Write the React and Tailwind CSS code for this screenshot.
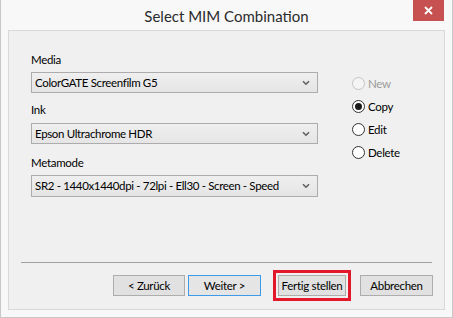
import React from 'react';

const font = { fontFamily: '"Segoe UI", Lato, "Noto Sans", sans-serif' };

function Select({ value, h = 'h-[21px]' }) {
  return (
    <div
      className={`w-[287px] ${h} border border-[#acacac] bg-gradient-to-b from-[#efefef] to-[#e5e5e5] flex items-center justify-between pl-[3px] pr-[7px]`}
    >
      <span className="text-[11.5px] tracking-[-0.35px] text-black whitespace-nowrap">{value}</span>
      <svg width="8" height="6" viewBox="0 0 8 6">
        <path d="M1 1.2 L4 4.2 L7 1.2" stroke="#606060" strokeWidth="1.6" fill="none" />
      </svg>
    </div>
  );
}

function Radio({ label, checked, disabled }) {
  return (
    <div className="h-[23px] flex items-center gap-[3px]">
      <span
        className={`w-[13px] h-[13px] rounded-full border flex items-center justify-center ${
          disabled ? 'border-[#c4c4c4] bg-[#f4f4f4]' : 'border-[#333] bg-white'
        }`}
      >
        {checked && <span className="w-[7px] h-[7px] rounded-full bg-[#1a1a1a]" />}
      </span>
      <span className={`text-[11.5px] tracking-[-0.3px] ${disabled ? 'text-[#9a9a9a]' : 'text-black'}`}>{label}</span>
    </div>
  );
}

function Button({ children, className = '' }) {
  return (
    <button
      className={`h-[21px] border text-[11.5px] tracking-[-0.3px] text-black whitespace-nowrap flex items-center justify-center ${className}`}
    >
      {children}
    </button>
  );
}

export default function App() {
  return (
    <div className="w-[453px] h-[318px] bg-[#f8f8f8] border-l border-r border-b border-[#c8c8c8] flex flex-col" style={font}>
      {/* Title bar */}
      <div className="h-[30px] relative flex items-center justify-center">
        <span className="text-[15px] text-[#2b2b2b] mt-[2px]">Select MIM Combination</span>
        <div className="absolute right-[8px] top-0 w-[31px] h-[21px] bg-[#c75050] flex items-center justify-center">
          <svg width="9" height="9" viewBox="0 0 9 9">
            <path d="M1 1 L8 8 M8 1 L1 8" stroke="white" strokeWidth="1.8" />
          </svg>
        </div>
      </div>

      {/* Client area */}
      <div className="mx-[7px] h-[280px] border border-[#d9d9d9] bg-[#f0f0f0] flex flex-col">
        <div className="flex-1 flex pl-[22px] pt-[21px]">
          <div className="flex flex-col w-[287px] text-[11.5px] tracking-[-0.3px] text-black">
            <div className="h-[16px] leading-[16px]">Media</div>
            <div className="mt-[4px]">
              <Select value="ColorGATE Screenfilm G5" />
            </div>
            <div className="mt-[9px] h-[16px] leading-[16px]">Ink</div>
            <div className="mt-[5px]">
              <Select value="Epson Ultrachrome HDR" />
            </div>
            <div className="mt-[11px] h-[16px] leading-[16px]">Metamode</div>
            <div className="mt-[4px]">
              <Select value="SR2 - 1440x1440dpi - 72lpi - Ell30 - Screen - Speed" h="h-[22px]" />
            </div>
          </div>
          <div className="ml-[34px] pt-[20px] flex flex-col">
            <Radio label="New" disabled />
            <Radio label="Copy" checked />
            <Radio label="Edit" />
            <Radio label="Delete" />
          </div>
        </div>

        <div className="mx-[12px] border-t border-[#a0a0a0]" />

        <div className="h-[46px] flex items-center justify-end pr-[11px] pb-[1px]">
          <Button className="w-[72px] border-[#adadad] bg-[#e1e1e1]">&lt; Zurück</Button>
          <Button className="ml-[3px] w-[73px] border-[#3c9ae8] bg-[#e5e5e5]">Weiter &gt;</Button>
          <div className="ml-[12px] border-[3px] border-[#e3182b] p-[2px] flex">
            <Button className="w-[68px] border-[#adadad] bg-[#e1e1e1]">Fertig stellen</Button>
          </div>
          <Button className="ml-[9px] w-[73px] border-[#adadad] bg-[#e1e1e1]">Abbrechen</Button>
        </div>
      </div>
    </div>
  );
}
